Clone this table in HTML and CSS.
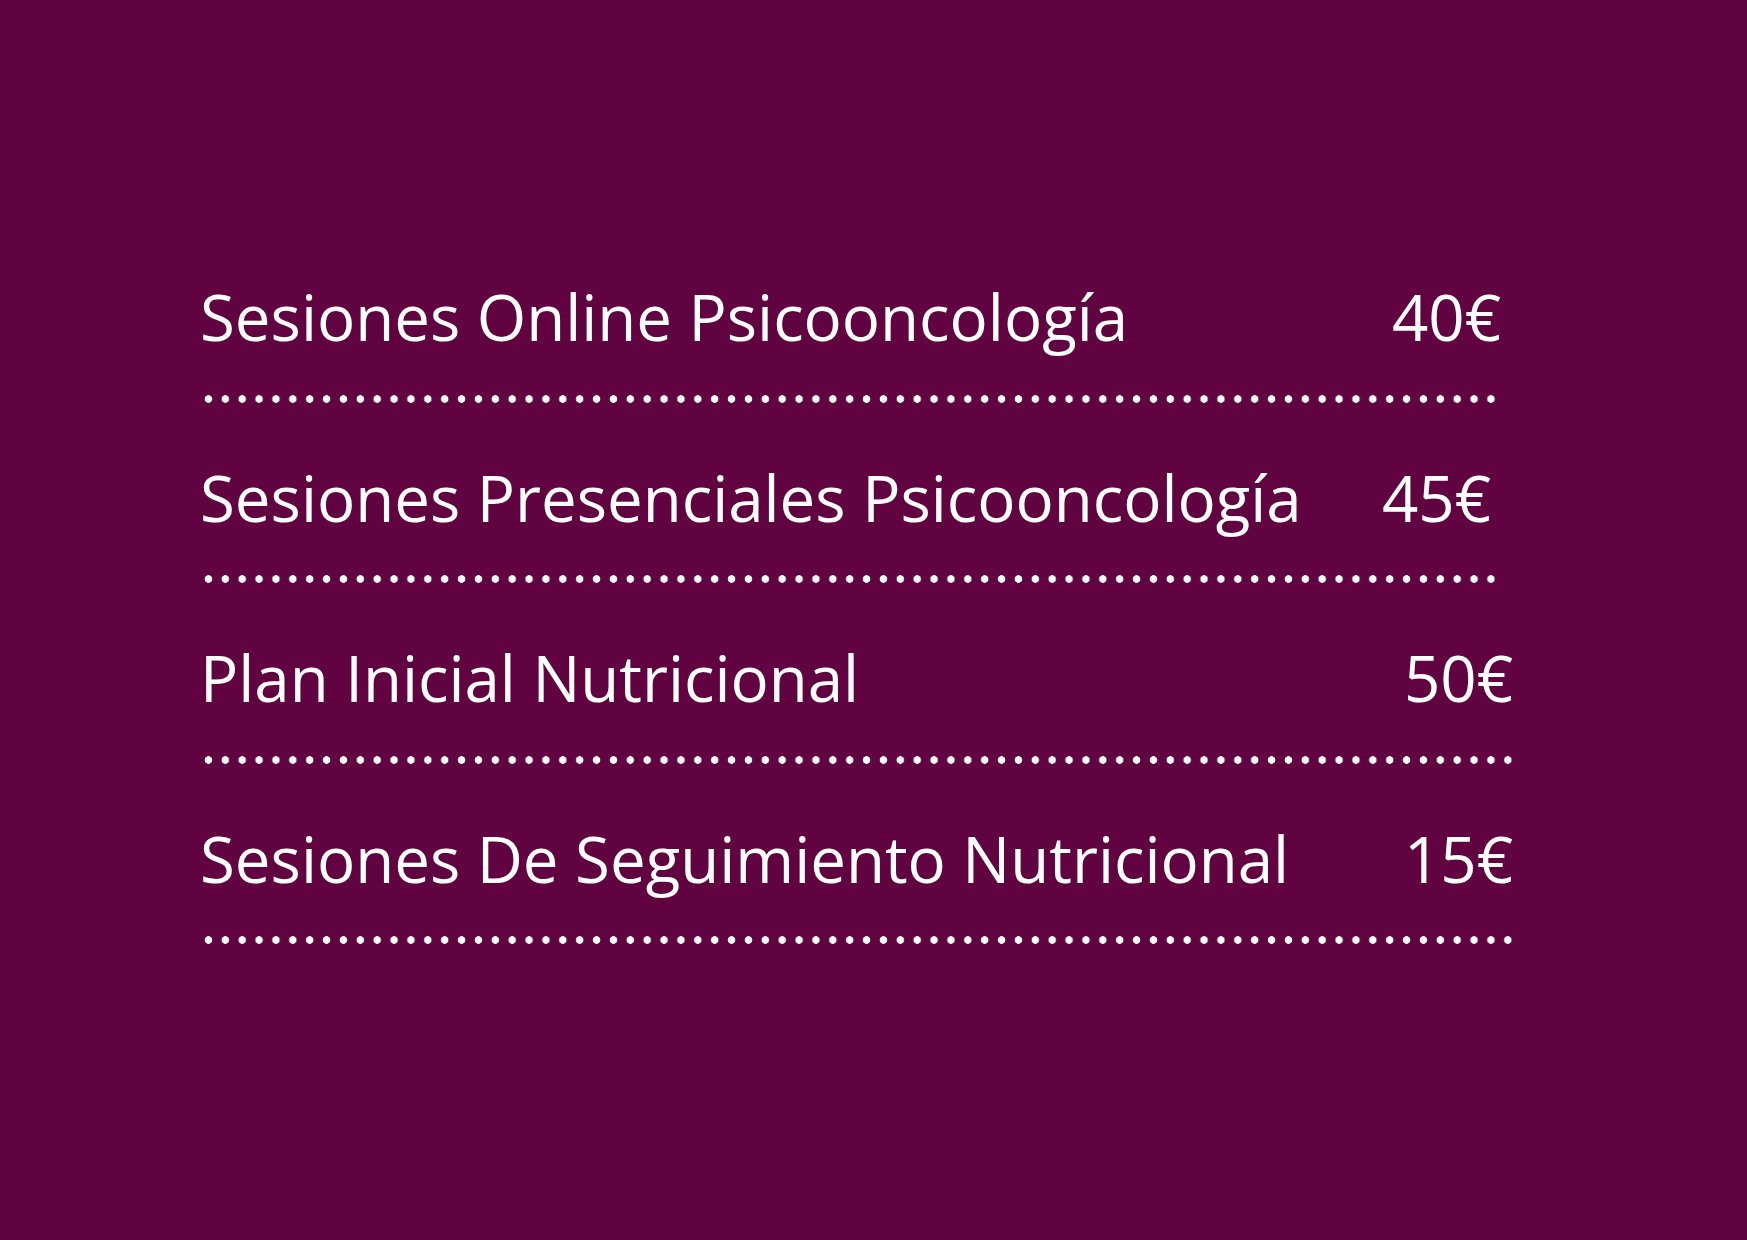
FILE: index.html
```html
<!DOCTYPE html>
<html lang="es">
<head>
    <meta charset="UTF-8">
    <meta name="viewport" content="width=device-width, initial-scale=1.0">
    <title>Tarifas</title>
    <link rel="stylesheet" href="styles.css">
</head>
<body>
    <div id="prices">
        <div class="item item-short">
            <div class="line">
                <span class="name">Sesiones Online Psicooncología</span>
                <span class="price">40€</span>
            </div>
            <div class="dots"></div>
        </div>
        <div class="item item-short">
            <div class="line">
                <span class="name">Sesiones Presenciales Psicooncología</span>
                <span class="price price-in">45€</span>
            </div>
            <div class="dots"></div>
        </div>
        <div class="item item-long">
            <div class="line">
                <span class="name">Plan Inicial Nutricional</span>
                <span class="price">50€</span>
            </div>
            <div class="dots"></div>
        </div>
        <div class="item item-long">
            <div class="line">
                <span class="name">Sesiones De Seguimiento Nutricional</span>
                <span class="price">15€</span>
            </div>
            <div class="dots"></div>
        </div>
    </div>
</body>
</html>
```

FILE: styles.css
```css
body {
    margin: 0;
    padding: 0;
    background-color: #610340;
    color: #fff;
    font-family: "Open Sans", sans-serif;
    height: 100vh;
    overflow: hidden;
}

#prices {
    padding: 277px 0 0 200px;
    display: flex;
    flex-direction: column;
    gap: 55px;
}

.item {
    display: flex;
    flex-direction: column;
    gap: 37.5px;
}

.item-short {
    width: 1300px;
}

.item-long {
    width: 1317px;
}

.line {
    display: flex;
    justify-content: space-between;
    font-size: 63.6px;
    line-height: 80px;
    white-space: nowrap;
}

.price {
    margin-right: -1px;
}

.item-long .price {
    margin-right: 4px;
}

.price-in {
    margin-right: 9px;
}

.dots {
    height: 8px;
    background-image: radial-gradient(circle, #fff 3.5px, rgba(255, 255, 255, 0) 4.1px);
    background-size: 16.886px 8px;
    background-repeat: repeat-x;
}
```
